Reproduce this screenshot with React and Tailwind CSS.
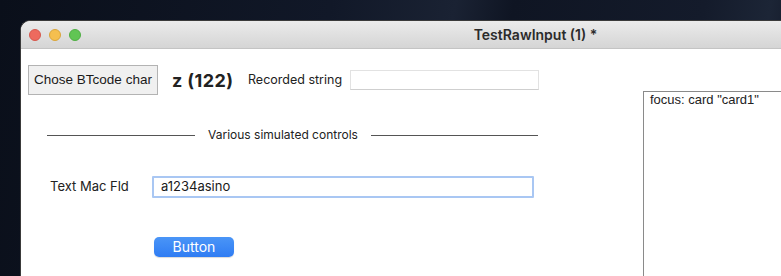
const App = () => {
    return (
        <div
            className="w-[781px] h-[276px] overflow-hidden pl-[20px] pt-[20px] bg-[linear-gradient(100deg,#0a0f1a_0%,#111828_40%,#1a2233_55%,#0f1523_62%,#141b2b_85%,#1c2536_93%,#0d1220_100%)]"
            style={{ fontFamily: 'Inter, "Liberation Sans", sans-serif' }}
        >
            <div className="w-[1030px] h-[300px] bg-white rounded-tl-[10px] border-l border-t border-[#3a3a3a] overflow-hidden">
                {/* title bar */}
                <div className="h-[28px] flex items-center bg-gradient-to-b from-[#ebebeb] to-[#d5d5d5] border-b border-[#c4c4c4] relative">
                    <div className="flex items-center gap-[8px] pl-[8px]">
                        <span className="w-[12px] h-[12px] rounded-full bg-[#ed6a5e] border border-[#d5574c]" />
                        <span className="w-[12px] h-[12px] rounded-full bg-[#f5bf4f] border border-[#d9a53a]" />
                        <span className="w-[12px] h-[12px] rounded-full bg-[#61c554] border border-[#4fae43]" />
                    </div>
                    <div className="absolute inset-0 flex items-center justify-center text-[14px] font-semibold text-[#2b2b2b]">
                        TestRawInput (1) *
                    </div>
                </div>

                {/* content */}
                <div className="flex">
                    <div className="w-[622px] pl-[7px]">
                        <div className="flex items-center mt-[16px] h-[30px]">
                            <button
                                className="h-[30px] w-[130px] bg-[#f0f0f0] border border-[#b3b3b3] text-[13.5px] text-[#1a1a1a]"
                                style={{ fontFamily: '"Liberation Sans", Arial, sans-serif' }}
                            >
                                Chose BTcode char
                            </button>
                            <span className="ml-[14px] w-[61px] whitespace-nowrap text-[18px] tracking-[0.4px] font-bold text-[#222]">z (122)</span>
                            <span className="ml-[15px] w-[96px] whitespace-nowrap text-[12.5px] text-[#222]">Recorded string</span>
                            <div className="ml-[6px] w-[189px] h-[20px] border border-[#e2e2e2] border-b-[#cfcfcf] bg-white" />
                        </div>

                        <div className="flex items-center mt-[32px] h-[16px] pl-[19px]">
                            <div className="w-[148px] h-px bg-[#555]" />
                            <span className="w-[176px] text-center whitespace-nowrap text-[12px] text-[#222]">Various simulated controls</span>
                            <div className="w-[167px] h-px bg-[#555]" />
                        </div>

                        <div className="flex items-center mt-[33px] h-[21px] pl-[22px]">
                            <span className="w-[102px] whitespace-nowrap text-[13px] text-[#222]">Text Mac Fld</span>
                            <div className="w-[382px] h-[22px] border-2 border-[#a9c7f3] rounded-[1px] flex items-center pl-[7px] text-[13px] text-[#1a1a1a]">
                                a1234asino
                            </div>
                        </div>

                        <div className="mt-[37px] pl-[126px]">
                            <button className="w-[80px] h-[20px] rounded-[5px] bg-gradient-to-b from-[#4a95f7] to-[#2f7cf3] text-white text-[14px] leading-none shadow-[0_1px_1px_rgba(0,0,0,0.15)]">
                                Button
                            </button>
                        </div>
                    </div>

                    <div
                        className="mt-[42px] flex-1 h-[260px] border-l border-t border-[#8a8a8a] pl-[6px] text-[13px] text-[#222] leading-[15px]"
                        style={{ fontFamily: '"Liberation Sans", Arial, sans-serif' }}
                    >
                        focus: card "card1"
                    </div>
                </div>
            </div>
        </div>
    );
};

export default App;
